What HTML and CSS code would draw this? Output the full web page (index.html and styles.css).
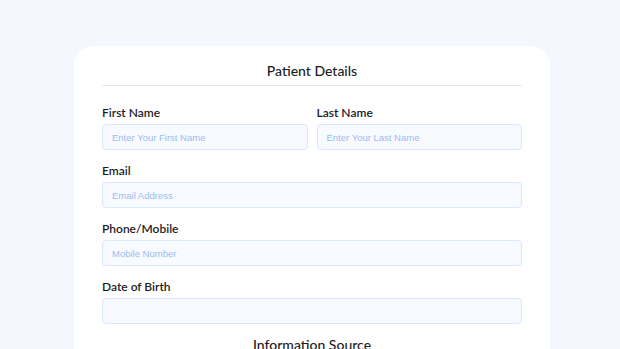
FILE: index.html
```html
<!DOCTYPE html>
<html lang="en">
<head>
  <meta charset="UTF-8" />
  <meta name="viewport" content="width=620, initial-scale=1.0"/>
  <title>Patient Details</title>
  <link rel="stylesheet" href="styles.css">
</head>
<body>
  <div class="page">
    <form class="card">
      <h2 class="card-title">Patient Details</h2>
      <div class="row">
        <label class="field">
          <span class="label">First Name</span>
          <input class="input" type="text" placeholder="Enter Your First Name">
        </label>
        <label class="field">
          <span class="label">Last Name</span>
          <input class="input" type="text" placeholder="Enter Your Last Name">
        </label>
      </div>
      <label class="field">
        <span class="label">Email</span>
        <input class="input" type="text" placeholder="Email Address">
      </label>
      <label class="field">
        <span class="label">Phone/Mobile</span>
        <input class="input" type="text" placeholder="Mobile Number">
      </label>
      <label class="field">
        <span class="label">Date of Birth</span>
        <input class="input" type="text">
      </label>
      <h2 class="section-title">Information Source</h2>
    </form>
  </div>
</body>
</html>
```

FILE: styles.css
```css
* {
  box-sizing: border-box;
}
html, body {
  margin: 0;
  padding: 0;
  height: 100%;
  overflow: hidden;
  background: #f4f7fe;
  font-family: "Lato", "Noto Sans", sans-serif;
  color: #1d1d1f;
}
.page {
  display: flex;
  justify-content: center;
  padding: 46px 0 0 4px;
}
/* Kart */
.card {
  width: 476px;
  background: #ffffff;
  border-radius: 20px;
  padding: 16px 28px 40px;
  display: flex;
  flex-direction: column;
}
.card-title {
  margin: 0;
  font-size: 14px;
  line-height: 18px;
  font-weight: 500;
  text-align: center;
  padding-bottom: 5px;
  border-bottom: 1px solid #e4e8ee;
  margin-bottom: 19px;
}
.row {
  display: grid;
  grid-template-columns: 1fr 1fr;
  gap: 9px;
}
.field {
  display: flex;
  flex-direction: column;
  gap: 3px;
  margin-bottom: 13px;
}
.label {
  font-size: 12px;
  line-height: 16px;
  font-weight: 600;
}
.input {
  height: 26px;
  width: 100%;
  border: 1px solid #d9e7fc;
  border-radius: 4px;
  background: #f7faff;
  padding: 0 9px;
  font-family: "Liberation Sans", Arial, sans-serif;
  font-size: 9.5px;
  color: #1d1d1f;
  outline: none;
}
.input::placeholder {
  color: #9dbaf2;
}
.section-title {
  margin: -1px 0 0;
  font-size: 14px;
  line-height: 18px;
  font-weight: 500;
  text-align: center;
}
```
